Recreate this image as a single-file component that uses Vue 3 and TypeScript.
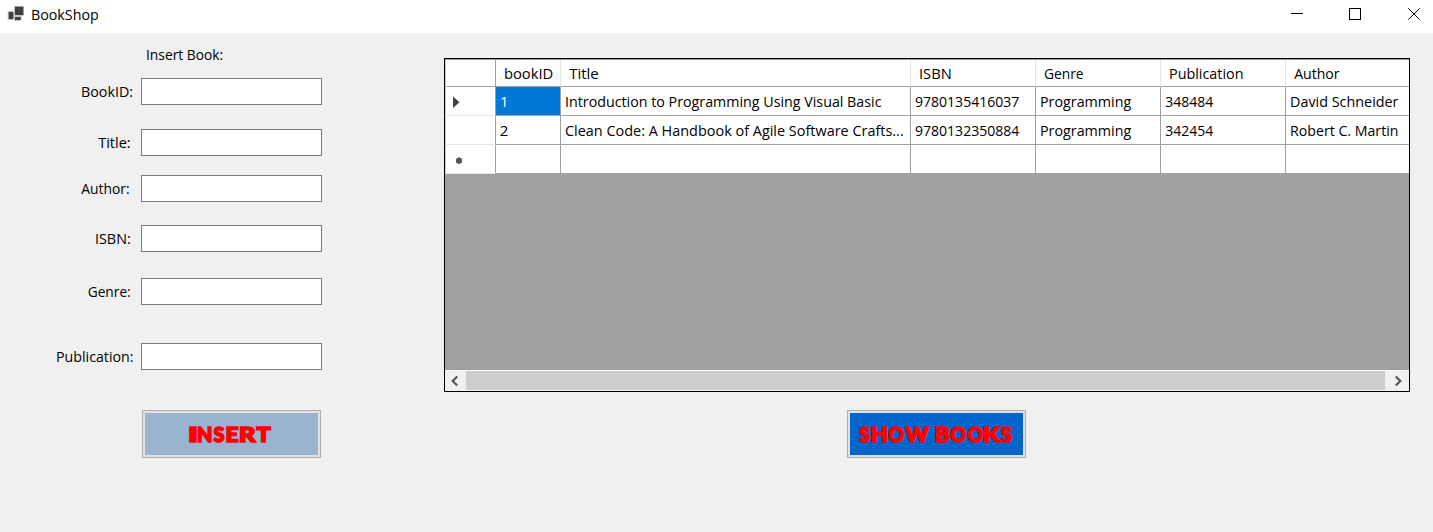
<script setup lang="ts">
interface Label { text: string; x: number; w: number }
interface Field extends Label { gap: number }

const fields: Field[] = [
  { text: 'BookID:', x: 81, w: 52, gap: 24 },
  { text: 'Title:', x: 98.2, w: 32.5, gap: 19 },
  { text: 'Author:', x: 81.2, w: 48.5, gap: 23 },
  { text: 'ISBN:', x: 95, w: 35.7, gap: 26 },
  { text: 'Genre:', x: 87.7, w: 43, gap: 38 },
  { text: 'Publication:', x: 56, w: 77.5, gap: 0 },
]

const headers: Label[] = [
  { text: '', x: 0, w: 0 },
  { text: 'bookID', x: 7.9, w: 49.4 },
  { text: 'Title', x: 8.2, w: 29.6 },
  { text: 'ISBN', x: 8, w: 32.8 },
  { text: 'Genre', x: 8, w: 39.5 },
  { text: 'Publication', x: 8, w: 74.5 },
  { text: 'Author', x: 8.2, w: 45.4 },
]

const rows: Label[][] = [
  [
    { text: '1', x: 4, w: 8.6 },
    { text: 'Introduction to Programming Using Visual Basic', x: 4, w: 316.5 },
    { text: '9780135416037', x: 4, w: 104.3 },
    { text: 'Programming', x: 4, w: 91.2 },
    { text: '348484', x: 4.2, w: 48 },
    { text: 'David Schneider', x: 4, w: 108.5 },
  ],
  [
    { text: '2', x: 3.7, w: 8.6 },
    { text: 'Clean Code: A Handbook of Agile Software Crafts...', x: 4, w: 338.7 },
    { text: '9780132350884', x: 4, w: 104.3 },
    { text: 'Programming', x: 4, w: 91.2 },
    { text: '342454', x: 4.2, w: 48 },
    { text: 'Robert C. Martin', x: 4, w: 108.5 },
  ],
  Array.from({ length: 6 }, () => ({ text: '', x: 0, w: 0 })),
]

const insertLetters: Label[] = [
  { text: 'I', x: 43, w: 10 },
  { text: 'N', x: 52, w: 15.5 },
  { text: 'S', x: 68.5, w: 11 },
  { text: 'E', x: 80.5, w: 13 },
  { text: 'R', x: 94, w: 16.5 },
  { text: 'T', x: 111.5, w: 14 },
]

const showLetters: Label[] = [
  { text: 'S', x: 9, w: 11 },
  { text: 'H', x: 20.5, w: 17.5 },
  { text: 'O', x: 38.5, w: 15.5 },
  { text: 'W', x: 55.5, w: 23 },
  { text: 'B', x: 84.5, w: 15.5 },
  { text: 'O', x: 100.5, w: 15.5 },
  { text: 'O', x: 117.5, w: 15.5 },
  { text: 'K', x: 132.5, w: 17.5 },
  { text: 'S', x: 151, w: 11 },
]
</script>

<template>
  <div class="window">
    <header class="titlebar">
      <svg class="caption" width="140" height="33">
        <rect x="7.7" y="11" width="6.3" height="9" fill="#c8c8c8" />
        <rect x="14" y="6" width="10" height="10" fill="#c8c8c8" />
        <rect x="14" y="16" width="7.5" height="5" fill="#c8c8c8" />
        <rect x="8.7" y="12" width="4.6" height="7" fill="#404040" />
        <rect x="15" y="6.7" width="8.3" height="8.3" fill="#404040" />
        <rect x="15" y="17" width="5.7" height="3" fill="#404040" />
        <text class="t" x="31" y="20" textLength="67.7" lengthAdjust="spacingAndGlyphs">BookShop</text>
      </svg>
      <svg class="controls" width="163" height="33" fill="none" stroke="#000" shape-rendering="crispEdges">
        <path d="M21 13.5H33" />
        <rect x="79.5" y="8.5" width="11" height="11" />
        <path d="M138.3 8.3L149.7 19.7M149.7 8.3L138.3 19.7" shape-rendering="auto" />
      </svg>
    </header>
    <main class="body">
      <section class="left">
        <svg class="heading" width="322" height="45">
          <text class="t" x="146" y="27" textLength="77.2" lengthAdjust="spacingAndGlyphs">Insert Book:</text>
        </svg>
        <div v-for="f in fields" :key="f.text" class="field" :style="{ marginBottom: f.gap + 'px' }">
          <svg width="141" height="27">
            <text class="t" :x="f.x" y="19" :textLength="f.w" lengthAdjust="spacingAndGlyphs">{{ f.text }}</text>
          </svg>
          <input type="text" :aria-label="f.text" />
        </div>
        <button class="btn insert">
          <svg width="173" height="42">
            <text class="show" y="29.3"><tspan v-for="(l, i) in insertLetters" :key="i" :x="l.x" :textLength="l.w" lengthAdjust="spacingAndGlyphs">{{ l.text }}</tspan></text>
          </svg>
        </button>
      </section>
      <section class="right">
        <div class="table">
          <div class="row head">
            <div v-for="(h, i) in headers" :key="i" class="cell">
              <svg v-if="h.text" width="100%" height="26">
                <text class="t" :x="h.x" y="19" :textLength="h.w" lengthAdjust="spacingAndGlyphs">{{ h.text }}</text>
              </svg>
            </div>
          </div>
          <div v-for="(r, ri) in rows" :key="ri" class="row">
            <div class="cell rowhead">
              <svg v-if="ri === 0" width="49" height="28"><path d="M7 9.5L13.5 15.3L7 21Z" fill="#404040" /></svg>
              <svg v-if="ri === 2" width="49" height="28">
                <circle cx="13" cy="15.7" r="2.9" fill="#404040" />
                <path d="M13 12V19.4M9.8 13.6L16.2 17.8M9.8 17.8L16.2 13.6" stroke="#606060" stroke-width="1" />
              </svg>
            </div>
            <div v-for="(c, ci) in r" :key="ci" class="cell" :class="{ selected: ri === 0 && ci === 0 }">
              <svg v-if="c.text" width="100%" height="28">
                <text class="t" :x="c.x" y="20" :textLength="c.w" lengthAdjust="spacingAndGlyphs">{{ c.text }}</text>
              </svg>
            </div>
          </div>
          <div class="scroll">
            <svg width="21" height="20"><path d="M12.2 5.5L7.7 10L12.2 14.5" /></svg>
            <div class="thumb"></div>
            <svg width="24" height="20"><path d="M10.8 5.5L15.3 10L10.8 14.5" /></svg>
          </div>
        </div>
        <button class="btn books">
          <svg width="173" height="42">
            <text class="show" y="29.3"><tspan v-for="(l, i) in showLetters" :key="i" :x="l.x" :textLength="l.w" lengthAdjust="spacingAndGlyphs">{{ l.text }}</tspan></text>
          </svg>
        </button>
      </section>
    </main>
  </div>
</template>

<style>
body { margin: 0; overflow: hidden; }
</style>

<style scoped>
.window { width: 1433px; height: 532px; background: #f0f0f0; overflow: hidden; }
.titlebar { height: 33px; background: #fff; display: flex; justify-content: space-between; }
svg { display: block; flex: none; }
.t { font: 15px "Open Sans", "Noto Sans", sans-serif; fill: #000; }
.body { display: flex; }
.left { width: 444px; }
.field { display: flex; height: 27px; }
input { box-sizing: border-box; width: 181px; height: 27px; border: 1px solid #7a7a7a; border-radius: 0; background: #fff; padding: 2px 4px; outline: none; font: 15px "Open Sans", sans-serif; }
.btn { display: block; box-sizing: border-box; width: 179px; height: 48px; padding: 2px; border: 1px solid #adadad; border-radius: 0; background: #e1e1e1; }
.insert { margin: 40px 0 0 142px; }
.insert svg { background: #99b4d1; }
.books { margin: 18px 0 0 403px; }
.books svg { background: #0066cc; }
.show { font: 900 21.5px Lato, sans-serif; fill: #f00; stroke: #f00; stroke-width: 1.7px; stroke-linejoin: miter; }
.right { width: 966px; padding-top: 25px; }
.table { box-sizing: border-box; width: 966px; height: 334px; border: 1px solid #000; background: #a0a0a0; display: flex; flex-direction: column; }
.row { display: grid; grid-template-columns: 51px 65px 350px 125px 125px 125px 123px; height: 29px; }
.head { height: 28px; border-top: 1px solid #a0a0a0; box-sizing: border-box; }
.cell { box-sizing: border-box; background: #fff; border-right: 1px solid #a0a0a0; border-bottom: 1px solid #a0a0a0; overflow: hidden; }
.cell:last-child { border-right: 0; }
.head .cell:not(:first-child) { border-right-color: #e5e5e5; }
.cell:first-child { border-left: 1px solid #d0d0d0; }
.rowhead { border-bottom-color: #e5e5e5; }
.selected { background: #0078d7; }
.selected .t { fill: #fff; }
.scroll { margin-top: auto; display: flex; height: 20px; border-top: 1px solid #fff; background: #f0f0f0; }
.scroll path { fill: none; stroke: #555; stroke-width: 2.2; }
.thumb { width: 919px; height: 19px; background: #cdcdcd; }
</style>
